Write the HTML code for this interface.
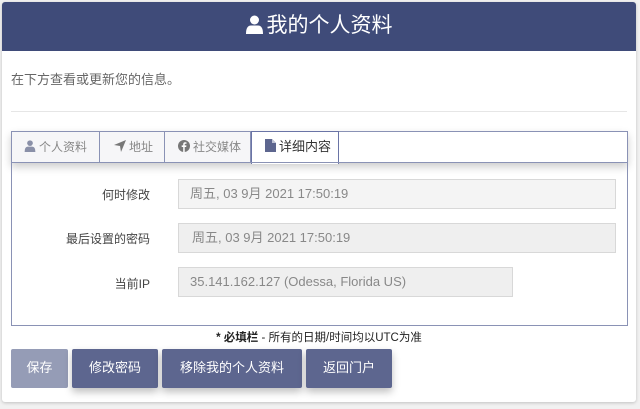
<!DOCTYPE html>
<html><head><meta charset="utf-8"><style>
body{margin:0;background:#f1f1f1;font-family:"Liberation Sans","Noto Sans CJK SC",sans-serif;width:640px;height:409px;overflow:hidden;position:relative}
.card{position:absolute;left:2px;top:2px;width:634px;height:400px;background:#fff;border-radius:3px;box-shadow:0 1px 3px rgba(0,0,0,.2)}
.hdr{position:absolute;left:0;top:0;width:634px;height:49px;background:#3f4b79;border-radius:3px 3px 0 0;color:#fff;font-size:21px;text-align:center;line-height:47px}
.intro{position:absolute;left:9px;top:67px;font-size:13px;color:#666}
.hr{position:absolute;left:9px;top:109px;width:616px;height:1px;background:#e6e6e6}
.tabs{position:absolute;left:9px;top:129px;width:615px;height:31px;border:1px solid #8a92b5;border-bottom:none;box-shadow:0 4px 8px rgba(0,0,0,.2);background:#fff}
.tab{position:absolute;top:0;height:31px;line-height:30px;font-size:12px;color:#888;border-right:1px solid #8a92b5;background:#f6f6f8;box-sizing:border-box;padding-left:12px}
.tab svg{margin-right:3px}
.tab.act{background:#fff;color:#333;border:1px solid #6a74a6;border-bottom:none;top:-1px;height:33px;font-size:13px}
.panel{position:absolute;left:9px;top:160px;width:615px;height:162px;border:1px solid #8a92b5;border-top:1px solid #8a92b5}
.lbl{position:absolute;right:477px;font-size:12px;color:#444}
.inp{position:absolute;left:166px;height:30px;border:1px solid #d8d8d8;background:#efefef;box-sizing:border-box;font-size:13px;color:#888;line-height:28px;padding-left:11px}
.note{position:absolute;left:0;width:634px;top:327px;text-align:center;font-size:11.5px;color:#222}
.btn{position:absolute;top:347px;height:39px;line-height:38px;background:#5d668f;color:#fff;font-size:13px;text-align:center;border-radius:2px;box-shadow:0 4px 8px rgba(0,0,0,.25)}
</style></head><body>
<div class="card">
<div class="hdr"><svg width="17" height="19" viewBox="0 0 17 19" style="vertical-align:-2px;margin-right:4px"><circle cx="8.5" cy="5" r="4.5" fill="#fff"/><path d="M0 19 Q0 10.5 5 10.5 L12 10.5 Q17 10.5 17 19Z" fill="#fff"/></svg>我的个人资料</div>
<div class="intro">在下方查看或更新您的信息。</div>
<div class="hr"></div>
<div class="tabs">
<div class="tab" style="left:0;width:88px;padding-left:12px"><svg width="12" height="12" viewBox="0 0 17 19" style="vertical-align:-1px"><circle cx="8.5" cy="5" r="4.5" fill="#8a90a8"/><path d="M0 19 Q0 10.5 5 10.5 L12 10.5 Q17 10.5 17 19Z" fill="#8a90a8"/></svg>个人资料</div>
<div class="tab" style="left:88px;width:65px;padding-left:14px"><svg width="12" height="12" viewBox="0 0 12 12" style="vertical-align:-1px"><path d="M12 0 L0 5 L6 6 L7 12Z" fill="#777"/></svg>地址</div>
<div class="tab" style="left:153px;width:86px;padding-left:13px"><svg width="12" height="12" viewBox="0 0 12 12" style="vertical-align:-1px"><circle cx="6" cy="6" r="6" fill="#777"/><path d="M6.7 12V7H8.2L8.4 5.4H6.7V4.5Q6.7 3.8 7.4 3.8H8.5V2.4Q7.8 2.3 7.1 2.3 5.2 2.3 5.2 4.3V5.4H3.7V7H5.2V12Z" fill="#fff"/></svg>社交媒体</div>
<div class="tab act" style="left:239px;width:88px;padding-left:13px"><svg width="11" height="13" viewBox="0 0 11 13" style="vertical-align:-1px"><path d="M0 0H7L11 4V13H0Z" fill="#5d668f"/><path d="M7 0V4H11" fill="#c0c4d6"/></svg>详细内容</div>
</div>
<div class="panel">
<div class="lbl" style="top:23px">何时修改</div>
<div class="inp" style="top:16px;width:438px;background:#f4f4f4">周五, 03 9月 2021 17:50:19</div>
<div class="lbl" style="top:67px">最后设置的密码</div>
<div class="inp" style="top:60px;width:438px;padding-left:13px">周五, 03 9月 2021 17:50:19</div>
<div class="lbl" style="top:112px">当前IP</div>
<div class="inp" style="top:104px;width:335px">35.141.162.127 (Odessa, Florida US)</div>
</div>
<div class="note"><b>* 必填栏</b> - 所有的日期/时间均以UTC为准</div>
<div class="btn" style="left:9px;width:57px;background:#959cb6;box-shadow:none">保存</div>
<div class="btn" style="left:70px;width:86px">修改密码</div>
<div class="btn" style="left:160px;width:140px">移除我的个人资料</div>
<div class="btn" style="left:304px;width:86px">返回门户</div>
</div>
</body></html>
